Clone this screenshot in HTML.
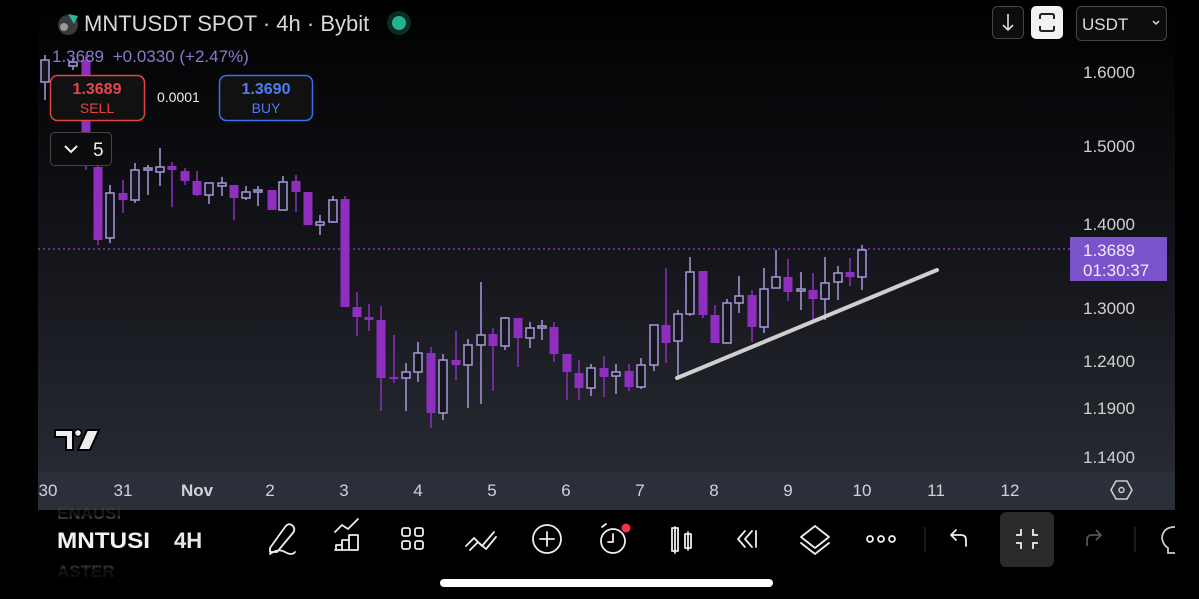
<!DOCTYPE html>
<html><head><meta charset="utf-8"><style>
html,body{margin:0;padding:0;background:#000;width:1199px;height:599px;overflow:hidden;font-family:"Liberation Sans",sans-serif}
svg{position:absolute;left:0;top:0}
</style></head><body>
<svg id="s" width="1199" height="599" viewBox="0 0 1199 599" xmlns="http://www.w3.org/2000/svg" font-family="Liberation Sans, sans-serif">
<defs>
<linearGradient id="bg" x1="0" y1="0" x2="0" y2="1">
<stop offset="0" stop-color="#000"/><stop offset="0.45" stop-color="#121318"/><stop offset="1" stop-color="#2a2d36"/>
</linearGradient>
</defs>
<rect x="0" y="0" width="1199" height="599" fill="#000"/>
<rect x="38" y="0" width="1137" height="510" fill="url(#bg)"/>
<rect x="38" y="472" width="1137" height="38" fill="#2b2f3a"/>
<line x1="38" y1="249" x2="1070" y2="249" stroke="#9b3fd0" stroke-width="1.2" stroke-dasharray="2,3"/>
<g id="candles"></g>
<line x1="677" y1="378" x2="937" y2="270" stroke="#cfcfcf" stroke-width="4" stroke-linecap="round"/>

<!-- header -->
<circle cx="68" cy="25" r="10" fill="#3a3a3a"/><circle cx="64" cy="27" r="4" fill="#999"/>
<path d="M68 14 L78 16 L74 24 Z" fill="#2bb5a0"/>
<text x="84" y="31" font-size="22" fill="#d9d9d9">MNTUSDT SPOT · 4h · Bybit</text>
<circle cx="399" cy="23" r="12" fill="#0e2a24"/><circle cx="399" cy="23" r="7" fill="#22b38a"/>
<text x="52" y="62" font-size="17" fill="#8c78cc">1.3689 <tspan dx="4">+0.0330 (+2.47%)</tspan></text>
<rect x="50.5" y="75.5" width="94" height="45" rx="7" fill="#111" stroke="#e0453f" stroke-width="1.5"/>
<text x="97" y="94" font-size="16" font-weight="bold" fill="#e8474a" text-anchor="middle">1.3689</text>
<text x="97" y="113" font-size="14" fill="#e0453f" text-anchor="middle">SELL</text>
<text x="157" y="102" font-size="14" fill="#eee">0.0001</text>
<rect x="219.5" y="75.5" width="93" height="45" rx="7" fill="#111" stroke="#3e6ef0" stroke-width="1.5"/>
<text x="266" y="94" font-size="16" font-weight="bold" fill="#4c7ef6" text-anchor="middle">1.3690</text>
<text x="266" y="113" font-size="14" fill="#4c7ef6" text-anchor="middle">BUY</text>
<rect x="50.5" y="132.5" width="61" height="33" rx="4" fill="#0c0c0e" stroke="#444" stroke-width="1"/>
<path d="M65 146 L71 152 L77 146" stroke="#eee" stroke-width="2" fill="none"/>
<text x="93" y="156" font-size="19" fill="#eee">5</text>

<!-- right buttons -->
<rect x="992.5" y="6.5" width="31" height="32" rx="5" fill="#0d0d0d" stroke="#444"/>
<path d="M1008 14 V30 M1003 25 L1008 30 L1013 25" stroke="#ddd" stroke-width="1.6" fill="none"/>
<rect x="1031" y="6" width="32" height="33" rx="5" fill="#f2f2f2"/>
<path d="M1040 19 V16 Q1040 14 1042 14 H1052 Q1054 14 1054 16 V19 M1040 26 V29 Q1040 31 1042 31 H1052 Q1054 31 1054 29 V26" stroke="#222" stroke-width="2" fill="none"/>
<rect x="1076.5" y="6.5" width="90" height="34" rx="5" fill="#0d0d0d" stroke="#444"/>
<text x="1082" y="30" font-size="17" fill="#ddd">USDT</text>
<path d="M1153 21 L1156 24 L1159 21" stroke="#ddd" stroke-width="1.5" fill="none"/>

<!-- price axis -->
<g font-size="17" fill="#d0d0d0">
<text x="1083" y="78">1.6000</text><text x="1083" y="152">1.5000</text><text x="1083" y="230">1.4000</text>
<text x="1083" y="314">1.3000</text><text x="1083" y="367">1.2400</text><text x="1083" y="414">1.1900</text><text x="1083" y="463">1.1400</text>
</g>
<rect x="1070" y="237" width="97" height="44" fill="#7a52c9"/>
<text x="1083" y="256" font-size="17" fill="#f0eaff">1.3689</text>
<text x="1083" y="276" font-size="17" fill="#f0eaff">01:30:37</text>

<!-- time axis -->
<g font-size="17" fill="#cfd2d8" text-anchor="middle">
<text x="48" y="496">30</text><text x="123" y="496">31</text><text x="197" y="496" font-weight="bold">Nov</text>
<text x="270" y="496">2</text><text x="344" y="496">3</text><text x="418" y="496">4</text><text x="492" y="496">5</text>
<text x="566" y="496">6</text><text x="640" y="496">7</text><text x="714" y="496">8</text><text x="788" y="496">9</text>
<text x="862" y="496">10</text><text x="936" y="496">11</text><text x="1010" y="496">12</text>
</g>
<path d="M1116 481 L1127 481 L1132 490 L1127 499 L1116 499 L1111 490 Z" stroke="#ccc" stroke-width="1.6" fill="none"/>
<circle cx="1121.5" cy="490" r="2.5" stroke="#ccc" stroke-width="1.5" fill="none"/>

<!-- TV logo -->
<path d="M55 430 H73 V450 H66 V437 H55 Z" fill="#eee" stroke="#000" stroke-width="2"/>
<circle cx="78" cy="433" r="3.5" fill="#eee" stroke="#000" stroke-width="1.5"/>
<path d="M87 430 H99 L90 450 H78 Z" fill="#eee" stroke="#000" stroke-width="2"/>

<!-- toolbar -->
<text x="57" y="519" font-size="17" fill="#3a3a3a" font-weight="bold">ENAUSI</text>
<text x="57" y="577" font-size="17" fill="#2e2e2e" font-weight="bold">ASTER</text>
<rect x="0" y="510" width="38" height="70" fill="#000"/>
<rect x="38" y="510" width="1137" height="6" fill="#000" opacity="0.6"/>
<rect x="38" y="569" width="1137" height="10" fill="#000" opacity="0.6"/>
<text x="57" y="548" font-size="22" font-weight="bold" fill="#f2f2f2" textLength="93" lengthAdjust="spacingAndGlyphs">MNTUSI</text>
<text x="174" y="548" font-size="22" font-weight="bold" fill="#e8e8e8">4H</text>
<g stroke="#eee" stroke-width="1.8" fill="none" stroke-linecap="round" stroke-linejoin="round">
<path d="M270 548 L285 527 Q289 522 293 526 Q296 530 292 534 L277 552 L270 552 Z M270 554 Q278 548 285 552 Q292 556 295 552"/>
<path d="M335 532 L342 525 L348 529 L358 519 M336 550 V545 H342 M342 550 V540 H349 V550 M349 550 V535 H358 V550 H335"/>
<rect x="402" y="528" width="8" height="8" rx="2"/><rect x="415" y="528" width="8" height="8" rx="2"/><rect x="402" y="541" width="8" height="8" rx="2"/><rect x="415" y="541" width="8" height="8" rx="2"/>
<path d="M466 546 L474 538 L482 546 L494 532 M470 550 L478 542 L486 549 L496 537"/>
<circle cx="547" cy="539" r="14"/><path d="M547 532 V546 M540 539 H554"/>
<circle cx="613" cy="541" r="12"/><path d="M613 534 V542 H608 M602 527 L606 524"/>
<path d="M675 527 V553 M688 532 V550 M675 528 H672 V551 H678 V528 Z M685 534 H691 V548 H685 Z"/>
<path d="M752 531 L745 539 L752 547 M745 531 L738 539 L745 547 M756 531 V547"/>
<path d="M815 526 L829 537 L815 548 L801 537 Z M801 543 L815 554 L829 543"/>
<circle cx="870" cy="539" r="3"/><circle cx="881" cy="539" r="3"/><circle cx="892" cy="539" r="3"/>
<path d="M966 546 V540 Q966 535 961 535 H952 M956 530 L951 535 L956 540"/>
</g>
<circle cx="626" cy="528" r="4.5" fill="#f23645"/>
<line x1="925" y1="527" x2="925" y2="552" stroke="#333"/>
<rect x="1000" y="512" width="54" height="55" rx="6" fill="#2a2a2a"/>
<path d="M1021 529 V535 H1016 M1033 529 V535 H1038 M1021 549 V543 H1016 M1033 549 V543 H1038" stroke="#eee" stroke-width="1.8" fill="none"/>
<path d="M1087 546 V540 Q1087 535 1092 535 H1100 M1096 530 L1101 535 L1096 540" stroke="#555" stroke-width="1.8" fill="none"/>
<line x1="1135" y1="527" x2="1135" y2="552" stroke="#333"/>
<path d="M1175 527 Q1163 527 1162 538 Q1163 545 1168 548 V553 H1175" stroke="#ccc" stroke-width="1.8" fill="none"/>
<rect x="1175" y="505" width="24" height="70" fill="#000"/>
<rect x="440" y="579" width="333" height="8" rx="4" fill="#fff"/>
</svg>
<script>
var d=[
[45,'u',60,82,55,100],[73,'u',62,66,58,70],[86,'d',60,135,55,170],[98,'d',167,240,160,245],
[110,'u',193,238,185,243],[123,'d',193,200,180,213],[135,'u',170,200,163,203],[148,'u',168,170,165,195],
[160,'u',167,172,148,186],[172,'d',166,170,162,207],[185,'d',171,181,168,185],[197,'d',181,195,171,196],
[209,'u',183,195,183,204],[222,'u',183,186,177,196],[234,'d',185,198,185,220],[246,'u',192,198,186,200],
[258,'u',190,192,186,206],[272,'d',190,210,190,210],[283,'u',182,210,176,210],[296,'d',181,192,175,212],
[308,'d',192,225,192,225],[320,'u',222,225,215,235],[333,'u',200,222,196,223],[345,'d',199,307,196,307],
[357,'d',307,317,292,336],[369,'d',317,320,304,331],[381,'d',320,378,306,411],[394,'d',377,379,335,383],
[406,'u',372,378,363,411],[418,'u',353,372,342,382],[431,'d',353,413,347,428],[443,'u',360,413,354,420],
[456,'d',360,365,331,380],[468,'u',345,365,339,408],[481,'u',335,345,282,404],[493,'d',334,346,328,391],
[505,'u',318,346,317,350],[518,'d',318,338,318,367],[530,'u',328,338,322,348],[542,'u',326,328,320,340],
[554,'d',327,354,322,362],[567,'d',354,372,354,400],[579,'d',373,388,360,400],[591,'u',368,388,364,396],
[604,'d',368,377,356,397],[616,'u',372,376,364,394],[629,'d',371,387,364,391],[641,'u',365,387,358,389],
[654,'u',325,365,325,371],[666,'d',325,343,268,363],[678,'u',314,341,310,378],[690,'u',272,314,257,316],
[703,'d',271,315,271,318],[715,'d',315,343,305,343],[727,'u',303,343,299,343],[739,'u',296,303,276,313],
[752,'d',295,327,290,342],[764,'u',289,327,268,333],[776,'u',277,288,250,288],[788,'d',277,292,259,301],
[801,'u',289,291,272,310],[813,'d',290,299,273,321],[825,'u',283,299,257,320],[838,'u',273,282,266,300],
[850,'d',272,277,258,286],[862,'u',250,277,245,290]];
var g=document.getElementById('candles'),h='';
d.forEach(function(c){var x=c[0],col=c[1]=='d'?'#8e2fc0':'#a898dc';
h+='<line x1="'+x+'" y1="'+c[4]+'" x2="'+x+'" y2="'+c[5]+'" stroke="'+col+'" stroke-width="1.5"/>';
var hh=Math.max(c[3]-c[2],2);
if(c[1]=='d')h+='<rect x="'+(x-4.5)+'" y="'+c[2]+'" width="9" height="'+hh+'" fill="'+col+'"/>';
else h+='<rect x="'+(x-4)+'" y="'+c[2]+'" width="8" height="'+hh+'" fill="#15161b" stroke="'+col+'" stroke-width="1.5"/>';});
g.innerHTML=h;
</script>
</body></html>
